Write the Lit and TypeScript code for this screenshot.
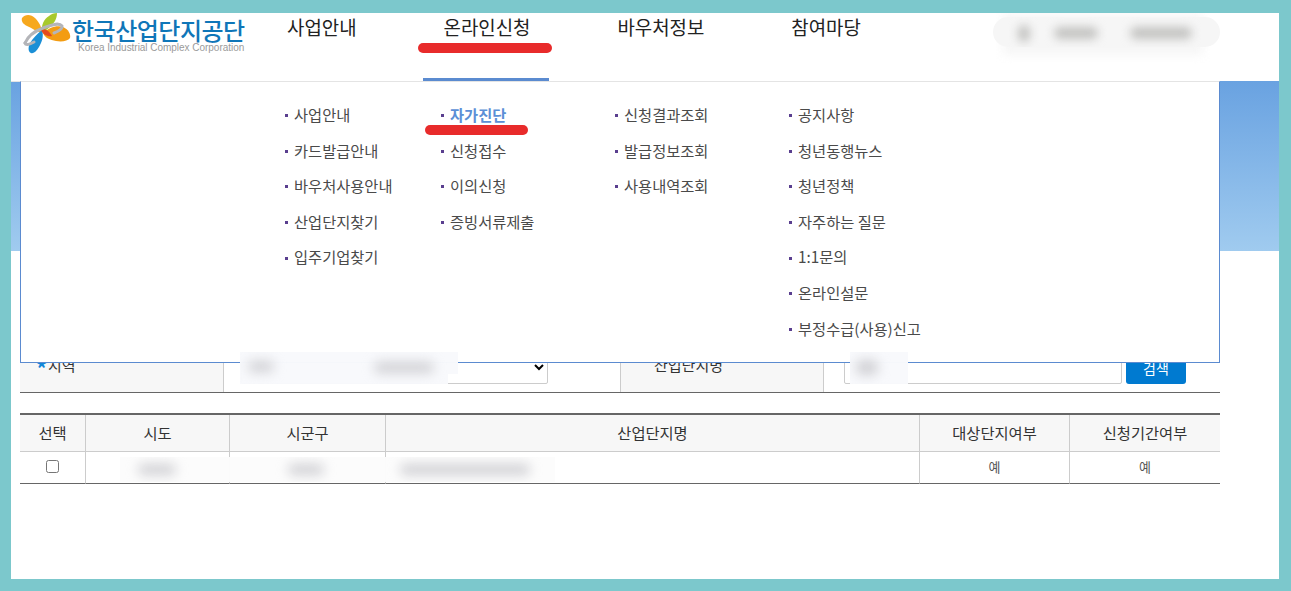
import { LitElement, html, css } from "lit";
import { customElement } from "lit/decorators.js";

const NAV = ["사업안내", "온라인신청", "바우처정보", "참여마당"];
const MENU: { w: number; items: string[] }[] = [
  { w: 156, items: ["사업안내", "카드발급안내", "바우처사용안내", "산업단지찾기", "입주기업찾기"] },
  { w: 174, items: ["자가진단", "신청접수", "이의신청", "증빙서류제출"] },
  { w: 174, items: ["신청결과조회", "발급정보조회", "사용내역조회"] },
  { w: 175, items: ["공지사항", "청년동행뉴스", "청년정책", "자주하는 질문", "1:1문의", "온라인설문", "부정수급(사용)신고"] },
];
const HEAD = ["선택", "시도", "시군구", "산업단지명", "대상단지여부", "신청기간여부"];

@customElement("app-root")
export class AppRoot extends LitElement {
  static styles = css`
    :host {
      display: block;
      width: 1291px;
      height: 591px;
      overflow: hidden;
      font-family: "Noto Sans CJK KR", "Noto Sans", sans-serif;
      color: #333;
    }
    .frame {
      box-sizing: border-box;
      width: 1291px;
      height: 591px;
      padding: 13px 12px 12px 11px;
      background: #7cc8cc;
    }
    .page {
      position: relative;
      height: 100%;
      background: #fff;
      overflow: hidden;
    }
    .header {
      box-sizing: border-box;
      height: 68px;
      display: flex;
      align-items: flex-start;
      padding-left: 10px;
    }
    .logo {
      width: 245px;
      flex: none;
      display: flex;
      gap: 1px;
    }
    .logo svg { flex: none; }
    .brand { display: flex; flex-direction: column; }
    .brand b {
      font-size: 24px;
      line-height: 27px;
      font-weight: 500;
      color: #0f76b8;
      letter-spacing: -0.5px;
      white-space: nowrap;
      margin-top: 3px;
    }
    .brand span {
      font-family: "Liberation Sans", sans-serif;
      font-size: 10px;
      line-height: 9px;
      color: #9a9a9a;
      white-space: nowrap;
      margin-left: 6px;
      letter-spacing: -0.03px;
    }
    .nav { display: flex; gap: 47px; height: 68px; }
    .nav div {
      box-sizing: border-box;
      height: 68px;
      padding: 0 19px 0 21px;
      font-size: 18.9px;
      line-height: 28px;
      color: #222;
      white-space: nowrap;
    }
    .nav .on { border-bottom: 3px solid #5b8bd0; }
    .glow {
      position: absolute;
      left: 992px;
      top: 0;
      width: 200px;
      height: 42px;
      background: #f6f6f6;
      filter: blur(5px);
    }
    .pill {
      position: absolute;
      left: 982px;
      top: 4px;
      width: 227px;
      height: 30px;
      border-radius: 15px;
      background: #f6f6f6;
      overflow: hidden;
    }
    .blob { position: absolute; background: #c2c2c0; filter: blur(5px); border-radius: 6px; }
    .b1 { left: 25px; top: 8px; width: 12px; height: 17px; }
    .b2 { left: 61px; top: 10px; width: 44px; height: 12px; }
    .b3 { left: 137px; top: 10px; width: 62px; height: 12px; }
    .hero {
      height: 170px;
      background: linear-gradient(#69a2e1, #a0cbef);
    }
    .content { padding: 89px 59px 0 9px; }
    .form {
      box-sizing: border-box;
      height: 53px;
      display: flex;
      border-bottom: 1px solid #666;
      font-size: 15px;
      color: #333;
    }
    .lab {
      box-sizing: border-box;
      background: #f7f7f7;
      display: flex;
      align-items: center;
      white-space: nowrap;
      padding-bottom: 4px;
    }
    .lab1 { width: 204px; padding-left: 16px; border-right: 1px solid #ccc; }
    .lab1 i {
      color: #1186d8;
      font-style: normal;
      font-weight: 700;
      font-size: 22px;
      line-height: 15px;
      width: 12px;
      padding-top: 6px;
    }
    .lab2 {
      width: 204px;
      padding-left: 33px;
      border-left: 1px solid #ccc;
      border-right: 1px solid #ccc;
    }
    .f1 { width: 396px; flex: none; display: flex; align-items: center; padding-left: 17px; box-sizing: border-box; }
    .f1 select {
      box-sizing: border-box;
      width: 307px;
      height: 34px;
      margin-top: 2px;
      background: #fff;
      border: 1px solid #ccc;
      border-radius: 2px;
      font: inherit;
    }
    .f2 { flex: 1; display: flex; align-items: center; gap: 4px; padding-left: 20px; }
    .f2 .inp {
      box-sizing: border-box;
      width: 278px;
      height: 34px;
      margin-top: 2px;
      border: 1px solid #ccc;
      border-radius: 2px;
    }
    .f2 .btn {
      box-sizing: border-box;
      width: 60px;
      height: 34px;
      margin-top: 2px;
      padding-top: 1px;
      background: #007ad0;
      color: #fff;
      border-radius: 3px;
      font-size: 14px;
      display: flex;
      align-items: center;
      justify-content: center;
    }
    .table {
      margin-top: 20px;
      display: grid;
      grid-template-columns: 66px 144px 156px 534px 150px 150px;
      border-top: 2px solid #666;
      font-size: 15.3px;
    }
    .th {
      box-sizing: border-box;
      height: 37px;
      padding-bottom: 2px;
      background: #f7f7f7;
      border-bottom: 1px solid #ccc;
      border-right: 1px solid #ccc;
      display: flex;
      align-items: center;
      justify-content: center;
      color: #333;
    }
    .td {
      box-sizing: border-box;
      height: 32px;
      padding-bottom: 2px;
      border-bottom: 1px solid #666;
      border-right: 1px solid #ccc;
      display: flex;
      align-items: center;
      justify-content: center;
      font-size: 13px;
      color: #555;
    }
    .table > :nth-child(6n) { border-right: none; }
    .td input { margin: 0; width: 13px; height: 13px; }
    .menu {
      position: absolute;
      left: 9px;
      top: 68px;
      box-sizing: border-box;
      width: 1200px;
      height: 282px;
      background: #fff;
      border: 1px solid #5b8bd0;
      border-top: 1px solid #e4e4e4;
      display: flex;
      padding: 15px 0 0 263px;
    }
    .line {
      position: absolute;
      left: 0;
      top: 68px;
      width: 9px;
      height: 1px;
      background: #e4e4e4;
    }
    .col { flex: none; }
    .col div {
      height: 35.6px;
      line-height: 35.6px;
      font-size: 15.3px;
      color: #4a4a4a;
      white-space: nowrap;
      display: flex;
      align-items: center;
    }
    .col div::before {
      content: "";
      width: 3px;
      height: 3px;
      background: #5a3f8f;
      margin: 2px 6px 0 1px;
      flex: none;
    }
    .col .act { color: #5b8fd6; font-weight: 700; }
    .mark { position: absolute; background: #e82b2b; border-radius: 5px; height: 10px; }
    .m1 { left: 407px; top: 30px; width: 134px; }
    .m2 { left: 414px; top: 112px; width: 103px; }
    .patch { position: absolute; overflow: hidden; background: rgba(248, 249, 252, 0.98); }
    .p1 { left: 229px; top: 339px; width: 208px; height: 32px; }
    .p1b { left: 437px; top: 339px; width: 10px; height: 22px; }
    .p2 { left: 839px; top: 339px; width: 58px; height: 32px; }
    .p3 { left: 109px; top: 444px; width: 435px; height: 25px; background: rgba(252, 252, 252, 0.98); }
    .smear { position: absolute; background: #d0d0d4; filter: blur(6px); border-radius: 6px; height: 11px; }
    .s1 { left: 8px; top: 9px; width: 26px; }
    .s2 { left: 134px; top: 10px; width: 60px; }
    .s3 { left: 6px; top: 8px; width: 22px; height: 15px; }
    .s4 { left: 18px; top: 7px; width: 38px; }
    .s5 { left: 168px; top: 7px; width: 36px; }
    .s6 { left: 280px; top: 7px; width: 130px; }
  `;

  render() {
    return html`
      <div class="frame">
        <div class="page">
          <div class="header">
            <div class="logo">
              <svg width="50" height="42" viewBox="0 0 50 42">
                <path d="M21 20C16 19 11 15 6 13 2 11 0 8 1 5 4 1 10 1 14 5 18 9 21 14 21 20Z" fill="#f6a81e"/>
                <path d="M22 20C28 15 35 12 42 14 47 16 50 21 49 25 47 28 41 29 35 28 29 27 24 25 22 20Z" fill="#f39c12"/>
                <path d="M21 19C20 12 23 6 28 3 30 1 33 0 36 0 36 6 33 10 30 13 27 16 24 18 21 19Z" fill="#a8c92c"/>
                <path d="M21 17C23 23 21 29 18 34 15 39 12 41 10 40 7 39 7 34 9 30 12 25 16 21 21 17Z" fill="#1b8fd6"/>
                <path d="M20 17C24 15 28 18 31 23 27 24 22 22 20 17Z" fill="#e4491f"/>
                <path d="M4 30C7 23 14 18 22 15 30 12 38 9 41 13 42 16 38 18 33 20" fill="none" stroke="#b4b5b9" stroke-width="3" stroke-linecap="round"/>
                <path d="M4 30C5 33 9 31 13 29" fill="none" stroke="#b4b5b9" stroke-width="3" stroke-linecap="round"/>
              </svg>
              <div class="brand">
                <b>한국산업단지공단</b>
                <span>Korea Industrial Complex Corporation</span>
              </div>
            </div>
            <div class="nav">
              ${NAV.map((n, i) => html`<div class=${i === 1 ? "on" : ""}>${n}</div>`)}
            </div>
          </div>
          <div class="hero"></div>
          <div class="content">
            <div class="form">
              <div class="lab lab1"><i>*</i>지역</div>
              <div class="f1"><select><option></option></select></div>
              <div class="lab lab2">산업단지명</div>
              <div class="f2"><div class="inp"></div><div class="btn">검색</div></div>
            </div>
            <div class="table">
              ${HEAD.map((h) => html`<div class="th">${h}</div>`)}
              <div class="td"><input type="checkbox" /></div>
              <div class="td"></div>
              <div class="td"></div>
              <div class="td"></div>
              <div class="td">예</div>
              <div class="td">예</div>
            </div>
          </div>
          <div class="line"></div>
          <div class="menu">
            ${MENU.map(
              (c) => html`<div class="col" style="width:${c.w}px">
                ${c.items.map((t) => html`<div class=${t === "자가진단" ? "act" : ""}>${t}</div>`)}
              </div>`
            )}
          </div>
          <div class="glow"></div>
          <div class="pill">
            <div class="blob b1"></div>
            <div class="blob b2"></div>
            <div class="blob b3"></div>
          </div>
          <div class="mark m1"></div>
          <div class="mark m2"></div>
          <div class="patch p1"><div class="smear s1"></div><div class="smear s2"></div></div>
          <div class="patch p1b"></div>
          <div class="patch p2"><div class="smear s3"></div></div>
          <div class="patch p3"><div class="smear s4"></div><div class="smear s5"></div><div class="smear s6"></div></div>
        </div>
      </div>
    `;
  }
}
